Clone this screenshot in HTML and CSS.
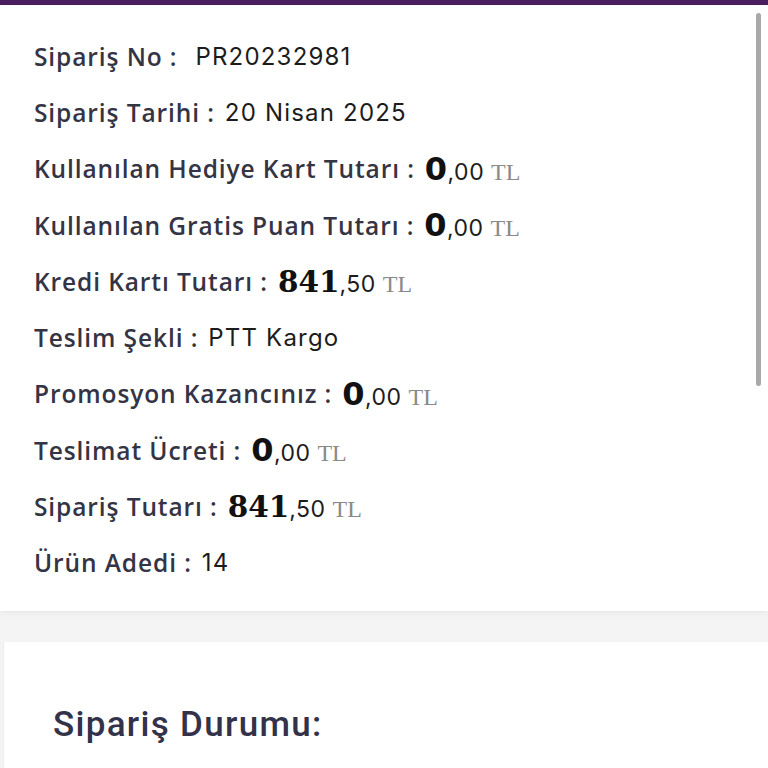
FILE: index.html
```html
<!DOCTYPE html>
<html lang="tr">
<head>
    <meta charset="UTF-8">
    <meta name="viewport" content="width=device-width, initial-scale=1.0">
    <title>Sipariş Detayı</title>
    <link rel="stylesheet" href="styles.css">
</head>
<body>

<div class="top-bar"></div>
<div class="scroll-thumb"></div>

<div class="card" id="order-info">
    <div class="row"><span class="label">Sipariş No :</span><span class="value">&nbsp;PR20232981</span></div>
    <div class="row"><span class="label">Sipariş Tarihi :</span><span class="value">20 Nisan 2025</span></div>
    <div class="row"><span class="label">Kullanılan Hediye Kart Tutarı :</span><span class="price"><b class="zero">0</b>,00 <em>TL</em></span></div>
    <div class="row"><span class="label">Kullanılan Gratis Puan Tutarı :</span><span class="price"><b class="zero">0</b>,00 <em>TL</em></span></div>
    <div class="row"><span class="label">Kredi Kartı Tutarı :</span><span class="price"><b class="big">841</b>,50 <em>TL</em></span></div>
    <div class="row"><span class="label">Teslim Şekli :</span><span class="value">PTT Kargo</span></div>
    <div class="row"><span class="label">Promosyon Kazancınız :</span><span class="price"><b class="zero">0</b>,00 <em>TL</em></span></div>
    <div class="row"><span class="label">Teslimat Ücreti :</span><span class="price"><b class="zero">0</b>,00 <em>TL</em></span></div>
    <div class="row"><span class="label">Sipariş Tutarı :</span><span class="price"><b class="big">841</b>,50 <em>TL</em></span></div>
    <div class="row"><span class="label">Ürün Adedi :</span><span class="value">14</span></div>
</div>

<div class="card status">
    <h2>Sipariş Durumu:</h2>
</div>

</body>
</html>
```

FILE: styles.css
```css
body {
    margin: 0;
    font-family: "Open Sans", Arial, sans-serif;
    background-color: #f4f4f4;
    overflow: hidden;
}
.top-bar {
    height: 5px;
    background-color: #4b1f5f;
}
.scroll-thumb {
    position: absolute;
    top: 13px;
    left: 756px;
    width: 5px;
    height: 373px;
    border-radius: 3px;
    background-color: #a9a9a9;
}
.card {
    background-color: #fff;
}
#order-info {
    padding: 23px 0 20px 34px;
    box-shadow: 0 2px 6px rgba(0, 0, 0, 0.06);
}
.row {
    height: 56.3px;
    display: flex;
    align-items: center;
    gap: 10px;
}
.label {
    font-size: 24.5px;
    font-weight: 600;
    color: #343444;
    letter-spacing: 0.9px;
}
.value {
    font-family: Inter, sans-serif;
    font-size: 24px;
    color: #1c1c1c;
    letter-spacing: 1.2px;
}
.price {
    font-family: Inter, sans-serif;
    font-size: 23px;
    color: #1c1c1c;
    letter-spacing: 0.5px;
}
.price b.zero {
    font-family: "DejaVu Sans", sans-serif;
    font-weight: bold;
    font-size: 32px;
    color: #111;
}
.price b.big {
    font-family: "DejaVu Serif", serif;
    font-weight: bold;
    font-size: 29.5px;
    letter-spacing: 0;
    color: #111;
}
.price em {
    font-style: normal;
    font-family: "Liberation Serif", serif;
    font-size: 24px;
    color: #8a8a8a;
    letter-spacing: 0;
}
.status {
    margin: 31px 0 0 3px;
    height: 200px;
    border-left: 1px solid #eee;
    padding: 62px 0 0 49px;
}
.status h2 {
    margin: 0;
    font-family: Roboto, sans-serif;
    font-size: 35px;
    font-weight: 500;
    letter-spacing: 1.3px;
    color: #32324a;
}
```
